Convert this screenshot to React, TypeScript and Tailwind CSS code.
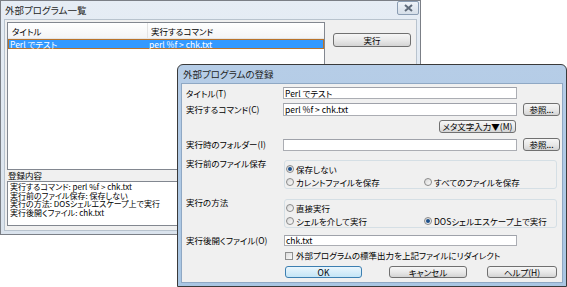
import React from "react";

function Btn({ className, children, def }: { className: string; children: React.ReactNode; def?: boolean }) {
  return (
    <div
      className={`flex items-center justify-center rounded-[3px] border text-[8.5px] leading-none ${
        def
          ? "border-[#3c7fb1] bg-gradient-to-b from-[#eaf6fd] to-[#c4e5f6]"
          : "border-[#707070] bg-gradient-to-b from-[#f6f6f6] via-[#e9e9e9] to-[#d4d4d4]"
      } ${className}`}
    >
      {children}
    </div>
  );
}

function Radio({ on }: { on?: boolean }) {
  return (
    <div className="flex h-[8px] w-[8px] shrink-0 items-center justify-center rounded-full border border-[#8a8a8a] bg-gradient-to-br from-[#d8d8d8] to-[#fbfbfb]">
      {on ? <div className="h-[4px] w-[4px] rounded-full bg-[#1c4f8a]" /> : null}
    </div>
  );
}

function Input({ className, children }: { className: string; children?: React.ReactNode }) {
  return (
    <div className={`flex items-center border border-[#abadb3] border-t-[#9fa2aa] bg-white pl-[1px] text-[8.5px] leading-none ${className}`}>
      {children}
    </div>
  );
}

export default function App() {
  return (
    <div className="relative h-[287px] w-[567px] overflow-hidden bg-white font-['Noto_Sans_CJK_JP','Noto_Sans',sans-serif] text-[8.5px] text-black [font-feature-settings:'palt']">
      {/* Window 1 */}
      <div className="absolute left-0 top-0 flex h-[235px] w-[421px] flex-col border border-[#7b7f86] bg-gradient-to-b from-[#e6edf5] to-[#dae3ed]">
        <div className="flex h-[18px] items-start justify-between pl-[4px] pr-[1px]">
          <span className="text-[9.5px] leading-[18px] text-[#1e1e1e]">外部プログラム一覧</span>
          <div className="flex h-[14px] w-[22px] items-center justify-center rounded-[2px] border border-[#8b9db3] bg-gradient-to-b from-[#eef3f8] to-[#d6dfe9]">
            <svg width="9" height="8" viewBox="0 0 9 8">
              <path d="M1 1 L8 7 M8 1 L1 7" stroke="#5f6b7a" strokeWidth="2" fill="none" />
            </svg>
          </div>
        </div>
        <div className="mx-[3px] mb-[3px] flex flex-1 flex-col border border-[#b8c3ce] bg-[#f0f0f0] pl-[2px] pt-[2px]">
          <div className="flex">
            <div className="flex h-[148px] w-[318px] flex-col border border-[#828790] bg-white">
              <div className="flex h-[16px] border-b border-[#e5e5e5] bg-gradient-to-b from-white to-[#f3f4f6] leading-[16px]">
                <div className="w-[140px] border-r border-[#e3e3e3] pl-[4px]">タイトル</div>
                <div className="pl-[3px]">実行するコマンド</div>
              </div>
              <div className="flex h-[10px] border border-[#b8732c] bg-[#3399ff] text-[8.5px] leading-[8px] text-white">
                <div className="w-[139px] pl-[1px]">Perl でテスト</div>
                <div className="pl-[1px]">perl %f &gt; chk.txt</div>
              </div>
            </div>
            <Btn className="ml-[8px] mt-[11px] h-[14px] w-[78px]">実行</Btn>
          </div>
          <div className="h-[11px] pl-[1px] leading-[11px]">登録内容</div>
          <div className="h-[45px] w-[404px] border border-[#828790] bg-white pl-[2px] pt-[1px] text-[8px] leading-[8.5px]">
            <div>実行するコマンド: perl %f &gt; chk.txt</div>
            <div>実行前のファイル保存: 保存しない</div>
            <div>実行の方法: DOSシェルエスケープ上で実行</div>
            <div>実行後開くファイル: chk.txt</div>
          </div>
        </div>
      </div>

      {/* Dialog */}
      <div className="absolute left-[177px] top-[64px] flex h-[223px] w-[390px] flex-col rounded-t-[6px] border border-[#3a3a3a] bg-gradient-to-b from-[#b6cde7] to-[#a9c6e3]">
        <div className="h-[18px] pl-[5px] text-[9.5px] leading-[18px] text-[#1e1e1e]">外部プログラムの登録</div>
        <div className="mx-[3px] mb-[3px] flex flex-1 flex-col border border-[#8fa8c4] bg-[#f0f0f0] pl-[4px] pt-[3px]">
          <div className="flex h-[12px] items-center">
            <div className="w-[97px]">タイトル(T)</div>
            <Input className="h-[12px] w-[234px]">Perl でテスト</Input>
          </div>
          <div className="mt-[4px] flex h-[13px] items-center">
            <div className="w-[97px]">実行するコマンド(C)</div>
            <Input className="h-[13px] w-[234px]">perl %f &gt; chk.txt</Input>
            <Btn className="ml-[6px] h-[13px] w-[37px]">参照...</Btn>
          </div>
          <div className="mt-[4px] flex h-[13px] pl-[253px]">
            <Btn className="h-[13px] w-[77px]">メタ文字入力▼(M)</Btn>
          </div>
          <div className="mt-[5px] flex h-[13px] items-center">
            <div className="w-[97px]">実行時のフォルダー(I)</div>
            <Input className="h-[12px] w-[234px]" />
            <Btn className="ml-[6px] h-[13px] w-[37px]">参照...</Btn>
          </div>
          <div className="mt-[9px] flex items-start">
            <div className="-mt-[3px] w-[97px] leading-[12px]">実行前のファイル保存</div>
            <div className="ml-[1px] flex h-[29px] w-[273px] flex-col gap-[1px] rounded-[3px] border border-[#d5dfe5] pl-[1px] pt-[2px]">
              <div className="flex h-[12px] items-center">
                <div className="flex w-[138px] items-center gap-[2px]">
                  <Radio on />
                  <span>保存しない</span>
                </div>
              </div>
              <div className="flex h-[12px] items-center">
                <div className="flex w-[138px] items-center gap-[2px]">
                  <Radio />
                  <span>カレントファイルを保存</span>
                </div>
                <div className="flex items-center gap-[2px]">
                  <Radio />
                  <span>すべてのファイルを保存</span>
                </div>
              </div>
            </div>
          </div>
          <div className="mt-[10px] flex items-start">
            <div className="-mt-[3px] w-[97px] leading-[12px]">実行の方法</div>
            <div className="ml-[1px] flex h-[29px] w-[273px] flex-col gap-[1px] rounded-[3px] border border-[#d5dfe5] pl-[1px] pt-[2px]">
              <div className="flex h-[12px] items-center">
                <div className="flex w-[138px] items-center gap-[2px]">
                  <Radio />
                  <span>直接実行</span>
                </div>
              </div>
              <div className="flex h-[12px] items-center">
                <div className="flex w-[138px] items-center gap-[2px]">
                  <Radio />
                  <span>シェルを介して実行</span>
                </div>
                <div className="flex items-center gap-[2px]">
                  <Radio on />
                  <span>DOSシェルエスケープ上で実行</span>
                </div>
              </div>
            </div>
          </div>
          <div className="mt-[7px] flex h-[11px] items-center">
            <div className="w-[97px]">実行後開くファイル(O)</div>
            <Input className="ml-[1px] h-[11px] w-[233px]">chk.txt</Input>
          </div>
          <div className="mt-[5px] flex h-[9px] items-center pl-[99px]">
            <div className="h-[8px] w-[8px] border border-[#8e8f8f] bg-gradient-to-br from-[#dcdcdc] to-[#fafafa]" />
            <span className="ml-[3px]">外部プログラムの標準出力を上記ファイルにリダイレクト</span>
          </div>
          <div className="mt-[6px] flex h-[12px] pl-[99px]">
            <Btn def className="h-[12px] w-[77px]">OK</Btn>
            <Btn className="ml-[27px] h-[12px] w-[78px]">キャンセル</Btn>
            <Btn className="ml-[20px] h-[12px] w-[70px]">ヘルプ(H)</Btn>
          </div>
        </div>
      </div>
    </div>
  );
}
